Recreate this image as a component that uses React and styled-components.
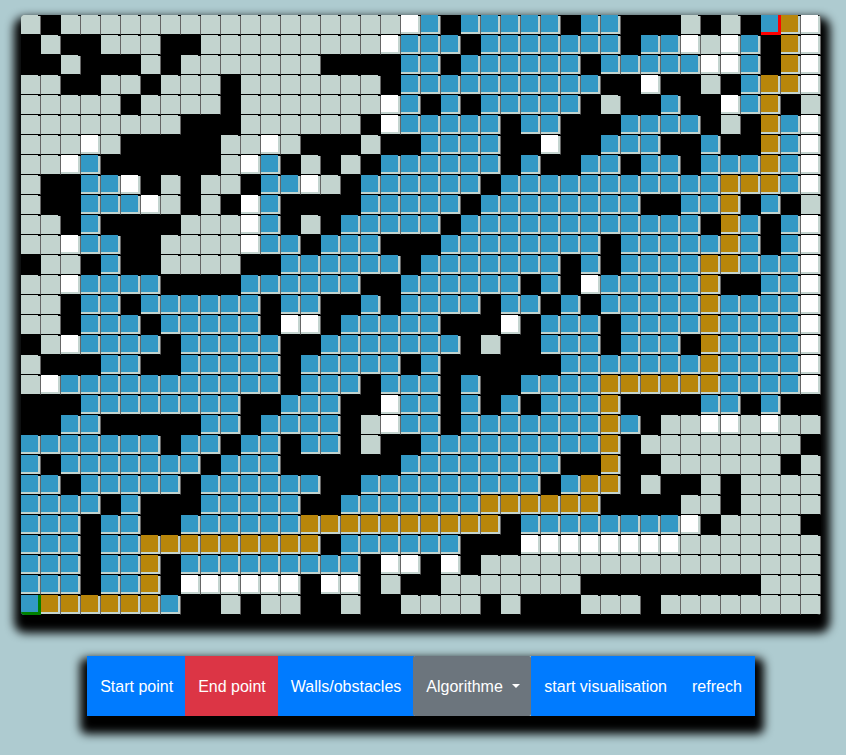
import React from 'react';
import styled, { createGlobalStyle } from 'styled-components';

const GlobalStyle = createGlobalStyle`
	html, body {
		margin: 0;
		height: 100%;
		background: #aecbd0;
		overflow: hidden;
	}
	body {
		font-family: "Liberation Sans", Arial, sans-serif;
	}
`;

// . wall, g unvisited, w frontier, b visited, o path, S start, E end
const ROWS = [
	['g.ggggggggggg', 'ggggggwb.bbbbb', '.bb...g.g.Eow'],
	['.g..ggg..gggg', 'gggggwbbb.bbbb', 'bbb.bbwgwb.ow'],
	['..g...g.ggggg', 'gg....bb.bbbbb', 'b.bbbbbwwb.ow'],
	['gg..gg.ggg.gg', 'ggggg.bbbbbbbb', 'bb..w..g.boow'],
	['ggggg.gggg.gg', 'gggggwb.b.bbbb', 'b.g..b..wbo.g'],
	['gggggggg...gg', 'gggg.wbbbbb.bb', '...bbbb.g.obw'],
	['gggwg.....ggw', 'g...g..bbbb..w', '..bbb..b..obw'],
	['ggwb......gwb', '.g.g.bbbbbb.b.', '.bb.bb.bbbobw'],
	['g..bbw.g.gg.b', 'bwg.bbbbbb.bbb', 'bbbbbbbbooobw'],
	['g..bbbwg.g.wb', '....bbbbb.bbbb', 'bbbb..bbo.b.g'],
	['gg.b....gggwb', '.g.bbbbb.bbbbb', 'bbbbbbb.ob.bw'],
	['ggwbb..ggggwb', 'b.bbb...bbbbbb', 'bb.bbbbbob.bw'],
	['.gg.b..gggg..', 'bbbbbb.bbbbbbb', '.b.bbbboobbbw'],
	['ggwbbbb....bb', 'bbbb..bbbbbb.b', '.wbbbbbo..bbw'],
	['gg.bb.bbbbbb.', 'bb..b.bbbb.bb.', 'b.bbbbbobbbbw'],
	['gg.bbb.bbbbb.', 'ww.bbbbb...w.b', 'bb.bbbbobbbbw'],
	['.gwbbbb.bbbbb', '..bbbbbbb.g..b', 'bb.bbb.obbbbw'],
	['g...bb..bbbbb', '.bbbbb.b......', 'bbbbbbbobbbbw'],
	['gwbbbbbbbbbbb', '.bbb.bbb.b..bb', 'bboooooobbbbw'],
	['...bbbbbbbb..', 'bbb..wbb.b.b.b', 'bbo....bb.b..'],
	['..bb.....bb.b', 'bbb.gwbb.bbbbb', 'bbob.ggwwgwgg'],
	['bbbbbbb.bb.bb', '.bb.g..bbbbbbb', 'bbo.gggggggg.'],
	['b.bbbbbbb.bbb', '......bbbbbbbb', '..o..gggggg.g'],
	['bb.bbbbb.bbbb', 'bb..bbbbbbbbb.', 'boo.g..g.gggg'],
	['bbbb.b...bbbb', 'b..bbbbbbboooo', 'oo....gg.gggg'],
	['bbb.bb..bbbbb', 'boooooooooo.bb', 'bbbbbbw.gggg.'],
	['bbb.bbooooooo', 'oo.bbbbbb...ww', 'wwwwwwggggggg'],
	['bbb.bbo.bbbbb', 'bbbb.ww.w.gggg', 'ggggggggggggg'],
	['bbb.bbo.wwwww', 'w.ww.g..gggggg', 'g.........ggg'],
	['Soooooob..g.g', 'g..g..gggg.g..', '.ggg.gggggggg'],
];

const FILLS = { g: '#c3d4cf', w: '#ffffff', b: '#3399c5', o: '#b8860b' };

const Page = styled.div`
	width: 842px;
	padding-top: 15px;
	display: flex;
	flex-direction: column;
	align-items: center;
`;

const BoardShadow = styled.div`
	border-radius: 4px;
	box-shadow: 1px 10px 10px 8px #000;
`;

const Board = styled.div`
	display: grid;
	grid-template-columns: repeat(40, 20px);
	grid-auto-rows: 20px;
	background: #000;
	border-radius: 4px;
	overflow: hidden;
`;

const Wall = styled.div`
	background: #000;
`;

const Cell = styled.div`
	position: relative;
	box-sizing: border-box;
	background: #c3d4cf;
	border-right: 1px solid #666;
	border-bottom: 1px solid #000;

	&::after {
		content: '';
		position: absolute;
		top: 0;
		right: -1px;
		width: 3px;
		height: 1px;
		background: #000;
	}
`;

const Fill = styled.div`
	width: 17px;
	height: 17px;
	background: ${({ $kind }) => FILLS[$kind]};
`;

const MarkerCell = styled.div`
	box-sizing: border-box;
	background: #3399c5;
	border-right: 3px solid ${({ $color }) => $color};
	border-bottom: 3px solid ${({ $color }) => $color};
`;

const Toolbar = styled.div`
	margin-top: 41px;
	display: flex;
	height: 60px;
	border-radius: 2px;
	box-shadow: 1px 10px 10px 8px #000;
`;

const Button = styled.button`
	box-sizing: border-box;
	height: 60px;
	padding: 1px 13px 0;
	margin-left: ${({ $flush }) => ($flush ? '0' : '-1px')};
	border: 0;
	border-radius: ${({ $rounded }) => ($rounded ? '2px' : '0')};
	background: ${({ $bg }) => $bg};
	color: #fff;
	font: 400 16px/1.5 "Liberation Sans", Arial, sans-serif;
	white-space: nowrap;
`;

const Caret = styled.span`
	display: inline-block;
	margin: 0 -2px 0 9.5px;
	vertical-align: 4px;
	border-top: 4.8px solid #fff;
	border-left: 4.8px solid transparent;
	border-right: 4.8px solid transparent;
`;

function renderCell(kind, key) {
	if (kind === '.') return <Wall key={key} />;
	if (kind === 'S') return <MarkerCell key={key} $color="#008000" />;
	if (kind === 'E') return <MarkerCell key={key} $color="#ff0000" />;
	return (
		<Cell key={key}>
			<Fill $kind={kind} />
		</Cell>
	);
}

export default function App() {
	const cells = ROWS.map(parts => parts.join('')).join('').split('');

	return (
		<Page>
			<GlobalStyle />
			<BoardShadow>
				<Board>
					{cells.map((kind, i) => renderCell(kind, i))}
				</Board>
			</BoardShadow>
			<Toolbar>
				<Button $bg="#007bff" $flush>Start point</Button>
				<Button $bg="#dc3545">End point</Button>
				<Button $bg="#007bff">Walls/obstacles</Button>
				<Button $bg="#6c757d" $rounded>Algorithme<Caret /></Button>
				<Button $bg="#007bff" $flush>start visualisation</Button>
				<Button $bg="#007bff">refrech</Button>
			</Toolbar>
		</Page>
	);
}
